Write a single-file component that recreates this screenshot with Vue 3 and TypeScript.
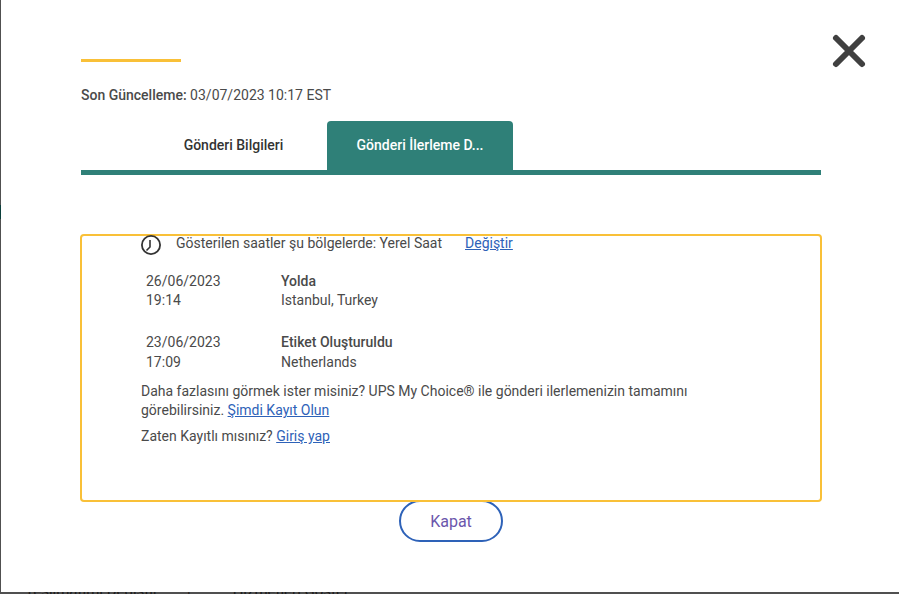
<template>
  <div class="page">
    <span class="strip-mark"></span>
    <div class="modal">
      <button class="close" type="button" aria-label="Kapat">
        <svg width="36" height="36" viewBox="0 0 36 36">
          <path d="M5 5 L31 31 M31 5 L5 31" stroke="#404040" stroke-width="6" stroke-linecap="round" />
        </svg>
      </button>
      <div class="accent"></div>
      <p class="updated"><b>Son Güncelleme:</b> 03/07/2023 10:17 EST</p>
      <div class="tabs">
        <div class="tab">Gönderi Bilgileri</div>
        <div class="tab active">Gönderi İlerleme D...</div>
      </div>
      <div class="panel">
        <div class="zone">
          <svg class="clock" width="20" height="20" viewBox="0 0 20 20" fill="none">
            <circle cx="10" cy="10" r="9.1" stroke="#333" stroke-width="1.8" />
            <path d="M9 5 L9 12 L5.5 15.5" stroke="#333" stroke-width="1.6" />
          </svg>
          <span class="zone-text">Gösterilen saatler şu bölgelerde: Yerel Saat</span>
          <a href="#" class="zone-link">Değiştir</a>
        </div>
        <div v-for="row in rows" :key="row.date" class="row">
          <div class="when">
            <div>{{ row.date }}</div>
            <div>{{ row.time }}</div>
          </div>
          <div>
            <div class="status">{{ row.status }}</div>
            <div>{{ row.place }}</div>
          </div>
        </div>
        <p class="more">
          Daha fazlasını görmek ister misiniz? UPS My Choice® ile gönderi ilerlemenizin tamamını
          görebilirsiniz. <a href="#">Şimdi Kayıt Olun</a>
        </p>
        <p class="login">Zaten Kayıtlı mısınız? <a href="#">Giriş yap</a></p>
      </div>
      <div class="actions">
        <button class="btn" type="button">Kapat</button>
      </div>
    </div>
    <div class="behind">
      <span>Teslimatımı Değiştir</span>
      <span class="sep">|</span>
      <span>Hizmetleri Göster</span>
    </div>
  </div>
</template>

<script setup lang="ts">
interface Row {
  date: string;
  time: string;
  status: string;
  place: string;
}

const rows: Row[] = [
  { date: '26/06/2023', time: '19:14', status: 'Yolda', place: 'Istanbul, Turkey' },
  { date: '23/06/2023', time: '17:09', status: 'Etiket Oluşturuldu', place: 'Netherlands' },
];
</script>

<style>
html,
body {
  margin: 0;
  overflow: hidden;
}
</style>

<style scoped>
.page {
  position: relative;
  height: 594px;
  background: #505050;
  padding-left: 1px;
  box-sizing: border-box;
  overflow: hidden;
  font-family: Roboto, "Noto Sans", sans-serif;
  font-size: 14px;
  color: #4a4a4a;
}

.strip-mark {
  position: absolute;
  left: 0;
  top: 205px;
  width: 1px;
  height: 14px;
  background: #0b3f3b;
}

.modal {
  position: relative;
  height: 592px;
  box-sizing: border-box;
  background: #fff;
  padding: 59px 78px 0 80px;
}

.close {
  position: absolute;
  top: 33px;
  right: 32px;
  padding: 0;
  border: 0;
  background: none;
  line-height: 0;
}

.accent {
  width: 100px;
  height: 3px;
  background: #f9c038;
}

.updated {
  margin: 25px 0 0;
  line-height: 16px;
}

.updated b {
  font-weight: 500;
}

.tabs {
  display: flex;
  margin-top: 18px;
  border-bottom: 5px solid #2f8078;
  padding-left: 73px;
}

.tab {
  width: 173px;
  height: 49px;
  box-sizing: border-box;
  padding: 0 14px 2px 0;
  display: flex;
  align-items: center;
  justify-content: center;
  font-weight: 500;
  color: #333;
}

.tab.active {
  width: 186px;
  padding-right: 0;
  background: #2f8078;
  color: #fff;
  border-radius: 4px 4px 0 0;
}

.panel {
  position: relative;
  z-index: 1;
  margin: 59px -1px 0;
  height: 268px;
  box-sizing: border-box;
  background: #fff;
  border: 2px solid #f9c038;
  border-radius: 4px;
  padding: 0 59px;
  line-height: 19.5px;
}

.panel a {
  color: #2e62b8;
}

.zone {
  display: flex;
  height: 19px;
  align-items: flex-start;
  margin-top: -1px;
}

.clock {
  flex: none;
}

.zone-text {
  margin-left: 15px;
  margin-top: -1px;
}

.zone-link {
  margin-left: 23px;
  margin-top: -1px;
}

.row {
  display: grid;
  grid-template-columns: 135px 1fr;
  padding-left: 5px;
  margin-top: 17.7px;
}

.row + .row {
  margin-top: 22.5px;
}

.status {
  font-weight: 500;
}

.more {
  margin: 9.8px 0 0;
  width: 580px;
  line-height: 19px;
}

.login {
  margin: 7px 0 0;
  line-height: 19px;
}

.actions {
  display: flex;
  justify-content: center;
  margin-top: -2px;
}

.btn {
  width: 104px;
  height: 42px;
  box-sizing: border-box;
  border: 2px solid #2e62b8;
  border-radius: 21px;
  background: #fff;
  color: #6b56ac;
  font: inherit;
  font-size: 16px;
}

.behind {
  display: flex;
  padding-left: 24px;
  margin-top: -10px;
  color: #1a1a1a;
  font-size: 15px;
}

.sep {
  margin: 0 42px 0 29px;
}
</style>
